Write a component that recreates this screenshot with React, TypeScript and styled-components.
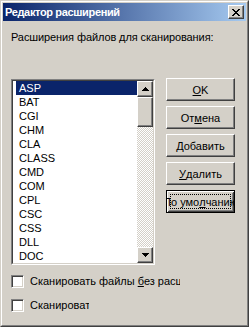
import React from "react";
import styled, { createGlobalStyle, css } from "styled-components";

const Global = createGlobalStyle`
  html, body { margin: 0; padding: 0; background: #d4d0c8; }
  body { font-family: "Liberation Sans", Arial, sans-serif; font-size: 11px; color: #000; }
`;

const raised = css`
  border: 1px solid;
  border-color: #fff #404040 #404040 #fff;
  box-shadow: inset -1px -1px #808080, inset 1px 1px #d4d0c8;
  background: #d4d0c8;
  box-sizing: border-box;
`;

const Window = styled.div`
  width: 249px;
  height: 327px;
  box-sizing: border-box;
  border: 1px solid;
  border-color: #d4d0c8 #404040 #404040 #d4d0c8;
  background: #d4d0c8;
`;

const Frame = styled.div`
  height: 100%;
  box-sizing: border-box;
  border: 1px solid;
  border-color: #fff #808080 #808080 #fff;
  padding: 1px;
  display: flex;
  flex-direction: column;
`;

const TitleBar = styled.div`
  height: 18px;
  flex: none;
  display: flex;
  align-items: center;
  justify-content: space-between;
  background: linear-gradient(to right, #0a246a, #a6caf0);
  padding: 0 2px;
`;

const Title = styled.span`
  color: #fff;
  font-weight: bold;
  font-size: 11px;
  line-height: 18px;
  letter-spacing: -0.35px;
`;

const CloseBtn = styled.div`
  ${raised};
  width: 16px;
  height: 14px;
  display: flex;
  align-items: center;
  justify-content: center;
`;

const Body = styled.div`
  flex: 1;
  display: flex;
  flex-direction: column;
  padding: 0 8px;
`;

const Label = styled.div`
  margin-top: 10px;
  line-height: 13px;
  white-space: nowrap;
  letter-spacing: -0.1px;
`;

const MainRow = styled.div`
  margin-top: 34px;
  display: flex;
  align-items: flex-start;
`;

const ListOuter = styled.div`
  width: 144px;
  box-sizing: border-box;
  border: 1px solid;
  border-color: #808080 #fff #fff #808080;
  margin-top: 1px;
`;

const ListInner = styled.div`
  border: 1px solid;
  border-color: #404040 #d4d0c8 #d4d0c8 #404040;
  background: #fff;
  display: flex;
  height: 182px;
  overflow: hidden;
`;

const Items = styled.div`
  flex: 1;
  display: flex;
  flex-direction: column;
  padding-left: 3px;
`;

const Item = styled.div<{ $sel?: boolean }>`
  height: 14px;
  line-height: 14px;
  padding-left: 3px;
  flex: none;
  background: ${(p) => (p.$sel ? "#0a246a" : "transparent")};
  color: ${(p) => (p.$sel ? "#fff" : "#000")};
`;

const ScrollBar = styled.div`
  width: 16px;
  display: flex;
  flex-direction: column;
`;

const ArrowBtn = styled.div`
  ${raised};
  width: 16px;
  height: 16px;
  flex: none;
  display: flex;
  align-items: center;
  justify-content: center;
`;

const Thumb = styled.div`
  ${raised};
  width: 16px;
  height: 30px;
  flex: none;
`;

const Track = styled.div`
  flex: 1;
  background-color: #fff;
  background-image: conic-gradient(#d4d0c8 25%, #fff 0 50%, #d4d0c8 0 75%, #fff 0);
  background-size: 2px 2px;
`;

const ButtonCol = styled.div`
  margin-left: 11px;
  display: flex;
  flex-direction: column;
  gap: 5px;
`;

const Button = styled.div<{ $def?: boolean }>`
  ${raised};
  width: 69px;
  height: 23px;
  display: flex;
  align-items: center;
  justify-content: center;
  white-space: nowrap;
  overflow: hidden;
  position: relative;
  ${(p) =>
    p.$def &&
    css`
      border: 1px solid #000;
      box-shadow: inset 1px 1px #fff, inset -1px -1px #404040, inset 2px 2px #d4d0c8, inset -2px -2px #808080;
    `}
`;

const FocusRect = styled.div`
  position: absolute;
  inset: 3px;
  border: 1px dotted #000;
  pointer-events: none;
`;

const CheckRow = styled.div<{ $top: number }>`
  margin-top: ${(p) => p.$top}px;
  display: flex;
  align-items: center;
  height: 13px;
`;

const CheckBox = styled.div`
  width: 13px;
  height: 13px;
  box-sizing: border-box;
  border: 1px solid;
  border-color: #808080 #fff #fff #808080;
  box-shadow: inset 1px 1px #404040, inset -1px -1px #d4d0c8;
  background: #fff;
  flex: none;
`;

const CheckLabel = styled.div<{ $w: number }>`
  margin-left: 6px;
  width: ${(p) => p.$w}px;
  overflow: hidden;
  white-space: nowrap;
  line-height: 13px;
`;

const items = ["ASP", "BAT", "CGI", "CHM", "CLA", "CLASS", "CMD", "COM", "CPL", "CSC", "CSS", "DLL", "DOC"];

const CloseGlyph = () => (
  <svg width="8" height="7" viewBox="0 0 8 7" shapeRendering="crispEdges">
    <path
      fill="#000"
      d="M0 0h2v1H0zM6 0h2v1H6zM1 1h2v1H1zM5 1h2v1H5zM2 2h4v1H2zM3 3h2v1H3zM2 4h4v1H2zM1 5h2v1H1zM5 5h2v1H5zM0 6h2v1H0zM6 6h2v1H6z"
    />
  </svg>
);

const UpGlyph = () => (
  <svg width="7" height="4" viewBox="0 0 7 4" shapeRendering="crispEdges">
    <path fill="#000" d="M3 0h1v1H3zM2 1h3v1H2zM1 2h5v1H1zM0 3h7v1H0z" />
  </svg>
);

const DownGlyph = () => (
  <svg width="7" height="4" viewBox="0 0 7 4" shapeRendering="crispEdges">
    <path fill="#000" d="M0 0h7v1H0zM1 1h5v1H1zM2 2h3v1H2zM3 3h1v1H3z" />
  </svg>
);

export default function App() {
  return (
    <>
      <Global />
      <Window>
        <Frame>
          <TitleBar>
            <Title>Редактор расширений</Title>
            <CloseBtn>
              <CloseGlyph />
            </CloseBtn>
          </TitleBar>
          <Body>
            <Label>Расширения файлов для сканирования:</Label>
            <MainRow>
              <ListOuter>
                <ListInner>
                  <Items>
                    {items.map((it, i) => (
                      <Item key={it} $sel={i === 0}>
                        {it}
                      </Item>
                    ))}
                  </Items>
                  <ScrollBar>
                    <ArrowBtn>
                      <UpGlyph />
                    </ArrowBtn>
                    <Thumb />
                    <Track />
                    <ArrowBtn>
                      <DownGlyph />
                    </ArrowBtn>
                  </ScrollBar>
                </ListInner>
              </ListOuter>
              <ButtonCol>
                <Button>
                  <u>O</u>K
                </Button>
                <Button>
                  От<u>м</u>ена
                </Button>
                <Button>
                  <u>Д</u>обавить
                </Button>
                <Button>
                  <u>У</u>далить
                </Button>
                <Button $def>
                  По умо<u>л</u>чанию
                  <FocusRect />
                </Button>
              </ButtonCol>
            </MainRow>
            <CheckRow $top={10}>
              <CheckBox />
              <CheckLabel $w={150}>
                Сканировать файлы <u>б</u>ез расширения
              </CheckLabel>
            </CheckRow>
            <CheckRow $top={11}>
              <CheckBox />
              <CheckLabel $w={59}>Сканировать</CheckLabel>
            </CheckRow>
          </Body>
        </Frame>
      </Window>
    </>
  );
}
